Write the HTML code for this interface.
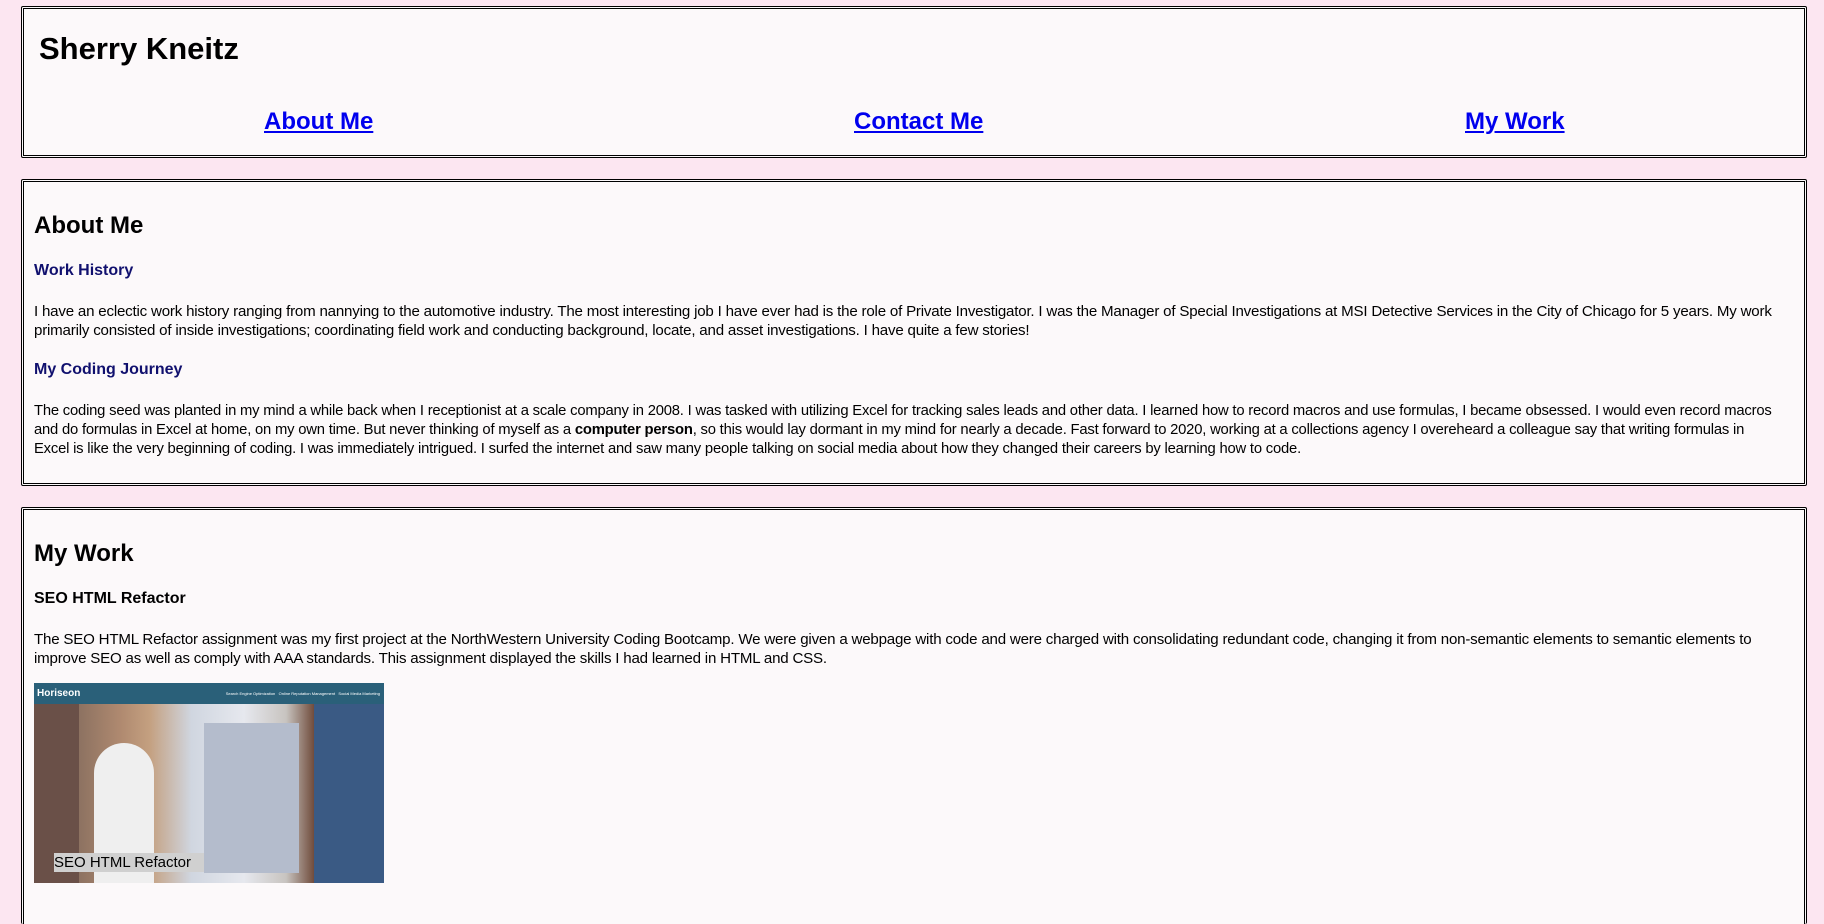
<!DOCTYPE html>
<html style="overflow:hidden;height:924px"><head><meta charset="utf-8"><style>
html,body{margin:0;padding:0}
body{background:#fce6f1;width:1824px;height:924px;overflow:hidden;font-family:"Liberation Sans",sans-serif;color:#000;position:relative}
.box{position:absolute;left:21px;width:1780px;border:3px double #000;background:#fcf9fa;border-radius:2px}
.p{position:absolute;left:34px;white-space:nowrap;font-size:15.1px;line-height:19px;letter-spacing:-0.2px}
.h{position:absolute;font-weight:bold;white-space:nowrap}
a{color:#0000ee;font-weight:bold;font-size:24px;position:absolute;top:108px;text-decoration:underline}
.n{color:#10106e;font-size:16px}
</style></head><body>
<div class="box" style="top:6px;height:146px"></div>
<div class="box" style="top:179px;height:301px"></div>
<div class="box" style="top:507px;height:414px;border-bottom:none"></div>
<div class="h" style="left:39px;top:31px;font-size:31px">Sherry Kneitz</div>
<a style="left:264px">About Me</a>
<a style="left:854px">Contact Me</a>
<a style="left:1465px">My Work</a>
<div class="h" style="left:34px;top:212px;font-size:24px">About Me</div>
<div class="h n" style="left:34px;top:262px">Work History</div>
<div class="p" style="top:302px">I have an eclectic work history ranging from nannying to the automotive industry. The most interesting job I have ever had is the role of Private Investigator. I was the Manager of Special Investigations at MSI Detective Services in the City of Chicago for 5 years. My work<br>primarily consisted of inside investigations; coordinating field work and conducting background, locate, and asset investigations. I have quite a few stories!</div>
<div class="h n" style="left:34px;top:361px">My Coding Journey</div>
<div class="p" style="top:402px;font-size:14.8px">The coding seed was planted in my mind a while back when I receptionist at a scale company in 2008. I was tasked with utilizing Excel for tracking sales leads and other data. I learned how to record macros and use formulas, I became obsessed. I would even record macros<br>and do formulas in Excel at home, on my own time. But never thinking of myself as a <b>computer person</b>, so this would lay dormant in my mind for nearly a decade. Fast forward to 2020, working at a collections agency I overeheard a colleague say that writing formulas in<br>Excel is like the very beginning of coding. I was immediately intrigued. I surfed the internet and saw many people talking on social media about how they changed their careers by learning how to code.</div>
<div class="h" style="left:34px;top:540px;font-size:24px">My Work</div>
<div class="h" style="left:34px;top:590px;font-size:16px">SEO HTML Refactor</div>
<div class="p" style="top:630px">The SEO HTML Refactor assignment was my first project at the NorthWestern University Coding Bootcamp. We were given a webpage with code and were charged with consolidating redundant code, changing it from non-semantic elements to semantic elements to<br>improve SEO as well as comply with AAA standards. This assignment displayed the skills I had learned in HTML and CSS.</div>
<div style="position:absolute;left:34px;top:683px;width:350px;height:200px;overflow:hidden;background:linear-gradient(90deg,#5a4a44 0%,#8a7060 12%,#b08a70 25%,#c4a080 33%,#d0d6e0 45%,#e6e8ee 60%,#c8c4c0 72%,#704c3c 80%,#3c5a80 92%,#2c4466 100%)">
<div style="height:21px;background:#2a6079;color:#fff;font-size:10px;font-weight:bold;line-height:21px;padding-left:3px">Horiseon<span style="float:right;font-size:4px;margin-right:4px;font-weight:normal">Search Engine Optimization &nbsp; Online Reputation Management &nbsp; Social Media Marketing</span></div>
<div style="position:absolute;left:0;top:21px;width:45px;height:179px;background:#6a5048"></div>
<div style="position:absolute;left:60px;top:60px;width:60px;height:140px;background:#efefef;border-radius:30px 30px 0 0"></div>
<div style="position:absolute;left:170px;top:40px;width:95px;height:150px;background:#b4bccc"></div>
<div style="position:absolute;left:280px;top:21px;width:70px;height:179px;background:#3a5a84"></div>
<div style="position:absolute;left:20px;width:150px;height:19px;background:#d0d0d0;font-size:15px;line-height:19px;top:170px;color:#000">SEO HTML Refactor</div>
</div>
</body></html>
